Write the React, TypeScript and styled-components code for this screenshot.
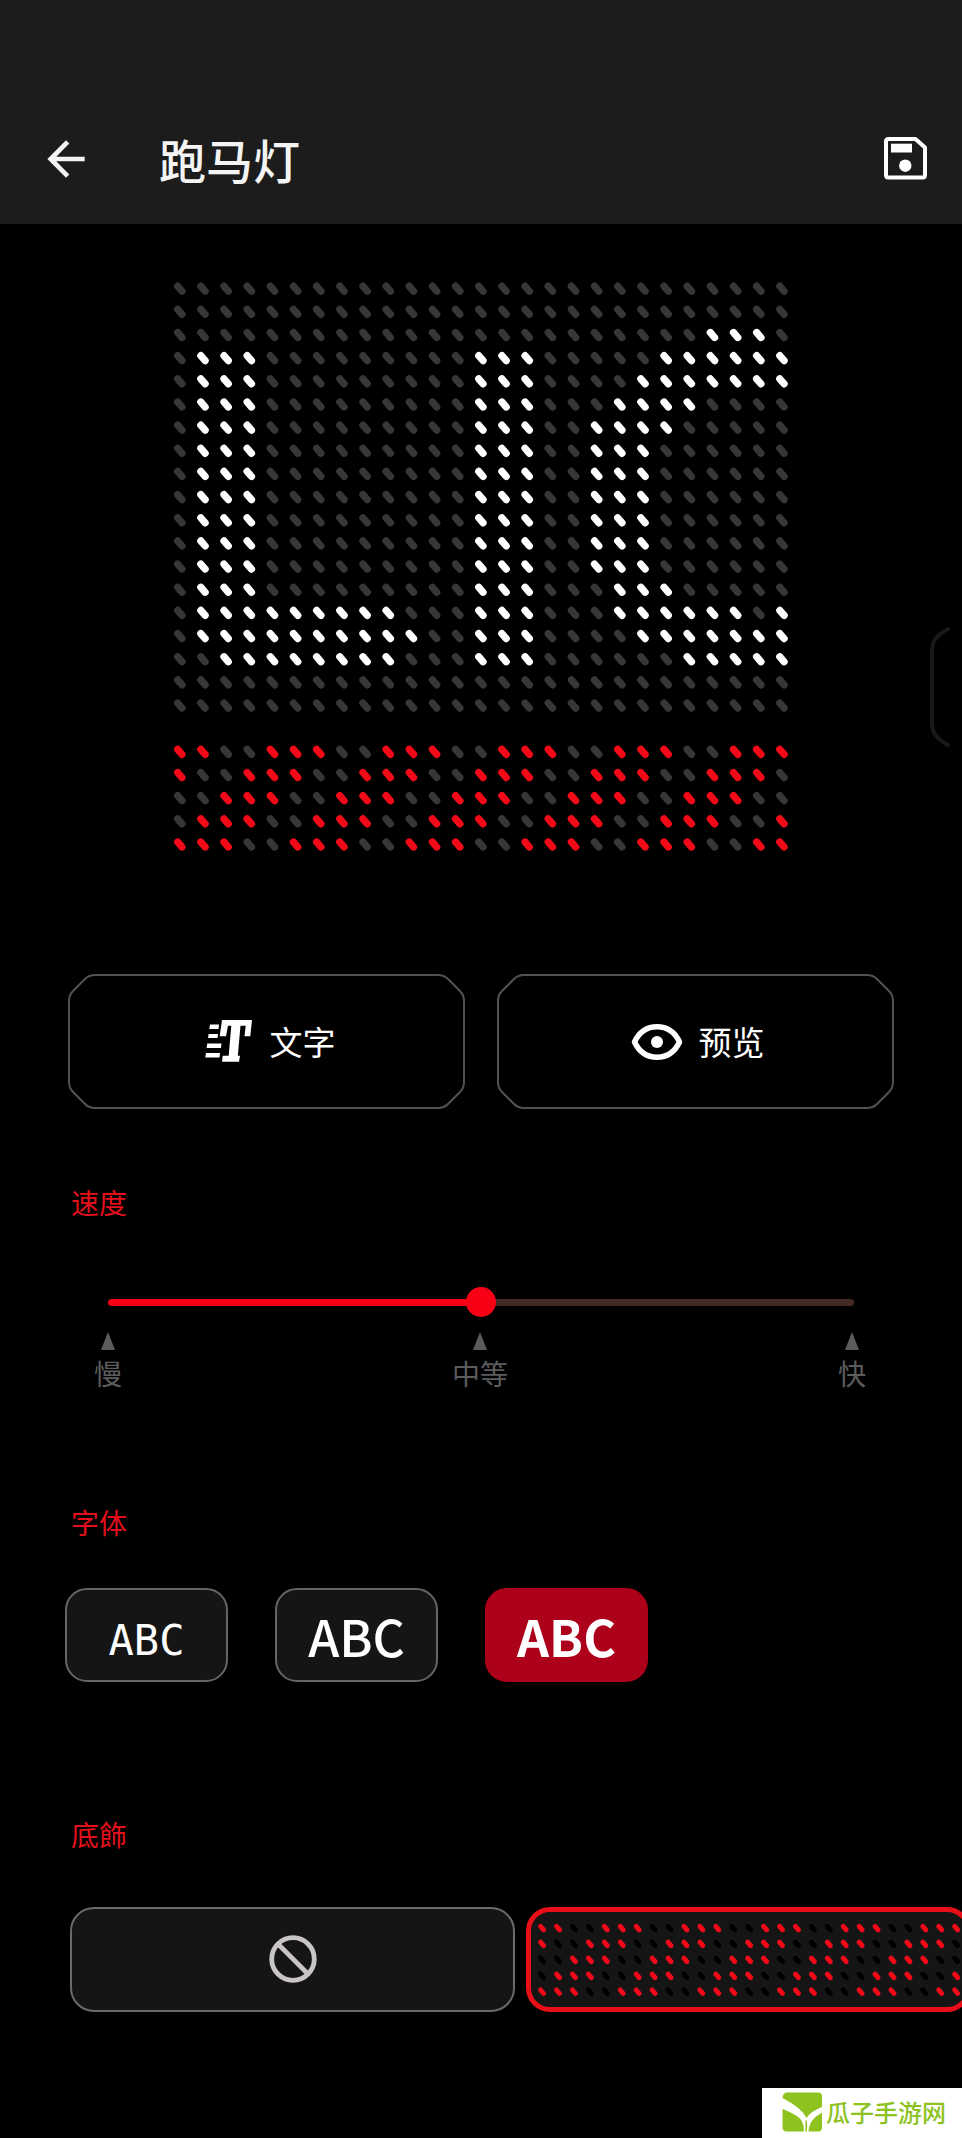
import React, { useState } from 'react';
import styled, { createGlobalStyle } from 'styled-components';

const GlobalStyle = createGlobalStyle`
  *, *::before, *::after { box-sizing: border-box; }
  body { margin: 0; background: #000; }
  button, input { font: inherit; color: inherit; margin: 0; padding: 0; }
`;

const Screen = styled.div`
  position: relative;
  min-height: 100vh;
  overflow: hidden;
  padding-bottom: 126px;
  background: #000;
  color: #fff;
  font-family: "Noto Sans CJK SC", sans-serif;
`;

const TopBar = styled.header`
  display: flex;
  align-items: center;
  height: 224px;
  padding: 94px 28px 0 38px;
  background: #1c1c1c;
`;

const IconButton = styled.button`
  display: flex;
  border: 0;
  background: none;
  cursor: pointer;
`;

const Title = styled.h1`
  flex: 1;
  margin: 0 0 0 65px;
  font-size: 47px;
  font-weight: 500;
  line-height: 64px;
  color: #f4f4f4;
`;

const Preview = styled.section`
  position: relative;
  display: flex;
  justify-content: center;
  padding: 53px 0 118px;
`;

const PreviewMatrix = styled.svg`
  display: block;
  width: 65%;
`;

const DrawerHandle = styled.svg`
  position: absolute;
  top: 402px;
  right: 11px;
`;

const Actions = styled.div`
  display: flex;
  gap: 32px;
  padding: 0 68px;
`;

const frame = encodeURIComponent(
  '<svg xmlns="http://www.w3.org/2000/svg" width="96" height="96"><path d="M1 27Q1 21 5 17L17 5Q21 1 27 1H69Q75 1 79 5L91 17Q95 21 95 27V69Q95 75 91 79L79 91Q75 95 69 95H27Q21 95 17 91L5 79Q1 75 1 69Z" fill="none" stroke="#525252" stroke-width="2"/></svg>'
);

const ActionButton = styled.button`
  flex: 1;
  display: flex;
  align-items: center;
  justify-content: center;
  gap: 16px;
  height: 135px;
  padding-left: 4px;
  border: 28px solid transparent;
  border-image: url("data:image/svg+xml,${frame}") 28 stretch;
  background: none;
  font-size: 33px;
  line-height: 48px;
  cursor: pointer;
`;

const SectionTitle = styled.h2<{ $before: number; $after: number }>`
  margin: ${(p) => p.$before}px 71px ${(p) => p.$after}px;
  font-size: 28px;
  font-weight: 400;
  line-height: 40px;
  color: #e3101c;
`;

const Range = styled.input<{ $percent: number }>`
  appearance: none;
  display: block;
  width: calc(100% - 216px);
  height: 30px;
  margin: 0 108px 14px;
  background: none;
  cursor: pointer;

  &::-webkit-slider-runnable-track {
    height: 7px;
    border-radius: 4px;
    background: linear-gradient(to right, #f50014 ${(p) => p.$percent}%, #432a22 ${(p) => p.$percent}%);
  }
  &::-webkit-slider-thumb {
    appearance: none;
    width: 30px;
    height: 30px;
    margin-top: -12px;
    border-radius: 50%;
    background: #fa0016;
  }
`;

const Ticks = styled.div`
  display: flex;
  justify-content: space-between;
  padding: 0 80px 0 78px;
`;

const Tick = styled.div`
  display: flex;
  flex-direction: column;
  align-items: center;
  gap: 7px;
  width: 60px;
  font-size: 28px;
  line-height: 32px;
  color: #5c5c5c;
`;

const FontRow = styled.div`
  display: flex;
  gap: 47px;
  padding: 0 65px;
`;

type Face = 'pixel' | 'regular' | 'bold';

const FontButton = styled.button<{ $face: Face; $active: boolean }>`
  width: 163px;
  height: 94px;
  padding-top: ${(p) => (p.$face === 'pixel' ? 12 : 0)}px;
  border: 2px solid ${(p) => (p.$active ? '#ad001a' : '#656565')};
  border-radius: 22px;
  background: ${(p) => (p.$active ? '#ad001a' : '#151515')};
  font-family: ${(p) => (p.$face === 'pixel' ? '"DejaVu Sans Mono", monospace' : '"Noto Sans CJK SC", sans-serif')};
  font-size: ${(p) => (p.$face === 'pixel' ? 42 : 50)}px;
  font-weight: ${(p) => (p.$face === 'bold' ? 700 : p.$face === 'regular' ? 500 : 400)};
  line-height: ${(p) => (p.$face === 'pixel' ? 78 : 88)}px;
  cursor: pointer;
`;

const DecorRow = styled.div`
  display: flex;
  gap: 11px;
  padding-left: 70px;
  overflow: hidden;
`;

const DecorTile = styled.button<{ $active: boolean }>`
  flex: 0 0 445px;
  display: flex;
  align-items: center;
  justify-content: center;
  height: 105px;
  border: ${(p) => (p.$active ? '5px solid #e90f19' : '2px solid #6a6a6a')};
  border-radius: 24px;
  background: #151515;
  cursor: pointer;
`;

const TileMatrix = styled.svg`
  flex: none;
  width: 430px;
`;

const Watermark = styled.div`
  position: absolute;
  right: 0;
  bottom: 0;
  display: flex;
  align-items: center;
  gap: 3px;
  width: 200px;
  height: 50px;
  padding: 0 0 2px 20px;
  background: #fff;
  color: #8dc21f;
  font-size: 24px;
  font-weight: 500;
  line-height: 32px;
  white-space: nowrap;
`;

const COLS = 27;
const TEXT_ROWS = [
  '...........................',
  '...........................',
  '.......................###.',
  '.###.........###.....######',
  '.###.........###....#######',
  '.###.........###...####....',
  '.###.........###..####.....',
  '.###.........###..###......',
  '.###.........###..###......',
  '.###.........###..###......',
  '.###.........###..###......',
  '.###.........###..###......',
  '.###.........###..###......',
  '.###.........###...###.....',
  '.#########...###...######.#',
  '.##########..###....#######',
  '..########...###......#####',
  '...........................',
  '...........................',
];

const stripeLit = (row: number, col: number) => [4, 0, 1].includes((row + col) % 5);

type LedProps = { row: number; col: number; color: string };

function Led({ row, col, color }: LedProps) {
  const x = col * 10 + 5;
  const y = row * 10 + 5;
  return (
    <line
      x1={x - 0.85}
      y1={y - 1.05}
      x2={x + 1.05}
      y2={y + 1.15}
      stroke={color}
      strokeWidth={3.1}
      strokeLinecap="round"
    />
  );
}

function Stripes({ offset = 0, off }: { offset?: number; off: string }) {
  return (
    <>
      {Array.from({ length: 5 * COLS }, (_, i) => {
        const row = Math.floor(i / COLS);
        const col = i % COLS;
        return <Led key={i} row={row + offset} col={col} color={stripeLit(row, col) ? '#f30a18' : off} />;
      })}
    </>
  );
}

const BackIcon = () => (
  <svg width="56" height="56" viewBox="0 0 24 24" fill="#f4f4f4" aria-hidden="true">
    <path d="M20 11H7.83l5.59-5.59L12 4l-8 8 8 8 1.41-1.41L7.83 13H20v-2z" />
  </svg>
);

const SaveIcon = () => (
  <svg width="58" height="58" viewBox="0 0 58 58" aria-hidden="true">
    <path
      d="M12.500 9H39.500L49 17.500V45Q49 47.500 46.500 47.500H12.500Q10 47.500 10 45V11.500Q10 9 12.500 9Z"
      fill="none"
      stroke="#fff"
      strokeWidth="4"
      strokeLinejoin="round"
    />
    <rect x="15" y="13.700" width="21" height="8.800" fill="#fff" />
    <circle cx="29.300" cy="35.700" r="6.200" fill="#fff" />
  </svg>
);

const TextIcon = () => (
  <svg width="52" height="44" viewBox="0 0 52 44" fill="#fff" aria-hidden="true">
    <path d="M20 1H50L48.300 17.300H42.500L43.700 6.700H38.500L35.800 36.700H38L37 42.700H20L20.700 36.700H26.700L29.300 6.700H26L24 17.300H17.700Z" />
    <path d="M8 5.500H17L16.500 10H7.300ZM6.600 15H16L15.500 19H6ZM5.300 24.500H19.500L19 29H4.600ZM4 34H18L17.500 38.500H3.300Z" />
  </svg>
);

const EyeIcon = () => (
  <svg width="52" height="44" viewBox="0 0 52 44" aria-hidden="true">
    <path
      d="M3.500 23C8 13.500 16 7.800 26 7.800S44 13.500 48.500 23C44 32.500 36 38.200 26 38.200S8 32.500 3.500 23Z"
      fill="none"
      stroke="#fff"
      strokeWidth="5.500"
      strokeLinejoin="round"
    />
    <circle cx="26" cy="23" r="6" fill="#fff" />
  </svg>
);

const NoneIcon = () => (
  <svg width="48" height="48" viewBox="0 0 48 48" fill="none" stroke="#c9c5c6" aria-hidden="true">
    <circle cx="24" cy="24" r="21.300" strokeWidth="4.800" />
    <path d="M9.500 9.500L38.500 38.500" strokeWidth="4.600" />
  </svg>
);

const TickMark = () => (
  <svg width="14" height="18" viewBox="0 0 14 18" fill="#5c5c5c" aria-hidden="true">
    <path d="M7 0L14 18H0Z" />
  </svg>
);

const LeafLogo = () => (
  <svg width="41" height="40" viewBox="0 0 41 40" fill="#8dc21f" aria-hidden="true">
    <path d="M5 0.500H36Q40 0.500 40 4.500V15Q29 19 24.500 26Q20 16 0.500 6Q1 0.500 5 0.500Z" />
    <path d="M0.500 17C14 23 22 25 22 39.500H5Q0.500 39.500 0.500 35Z" />
    <path d="M40 20.500V35Q40 39.500 36 39.500H26.500Q26.500 28 40 20.500Z" />
    <path d="M23.500 28Q25 28 25 30V39.500H23.500Z" />
  </svg>
);

const faces: Face[] = ['pixel', 'regular', 'bold'];

export default function App() {
  const [speed, setSpeed] = useState(50);
  const [face, setFace] = useState<Face>('bold');
  const [striped, setStriped] = useState(true);

  return (
    <Screen>
      <GlobalStyle />
      <TopBar>
        <IconButton aria-label="返回"><BackIcon /></IconButton>
        <Title>跑马灯</Title>
        <IconButton aria-label="保存"><SaveIcon /></IconButton>
      </TopBar>

      <Preview>
        <PreviewMatrix viewBox="0 0 270 250" aria-hidden="true">
          {TEXT_ROWS.map((line, row) =>
            [...line].map((cell, col) => (
              <Led key={`${row}-${col}`} row={row} col={col} color={cell === '#' ? '#fff' : '#37373a'} />
            ))
          )}
          {striped && <Stripes offset={20} off="#37373a" />}
        </PreviewMatrix>
        <DrawerHandle width="22" height="122" viewBox="0 0 22 122" fill="none" stroke="#191919" strokeWidth="4" strokeLinecap="round" aria-hidden="true">
          <path d="M19 3C10 8 3 13 3 25V97C3 109 10 114 19 119" />
        </DrawerHandle>
      </Preview>

      <Actions>
        <ActionButton><TextIcon />文字</ActionButton>
        <ActionButton><EyeIcon />预览</ActionButton>
      </Actions>

      <SectionTitle $before={73} $after={66}><label htmlFor="speed">速度</label></SectionTitle>
      <Range
        id="speed"
        type="range"
        min={0}
        max={100}
        value={speed}
        $percent={speed}
        onChange={(e) => setSpeed(Number(e.target.value))}
      />
      <Ticks>
        {['慢', '中等', '快'].map((label) => (
          <Tick key={label}><TickMark />{label}</Tick>
        ))}
      </Ticks>

      <SectionTitle $before={113} $after={46}>字体</SectionTitle>
      <FontRow>
        {faces.map((f) => (
          <FontButton key={f} $face={f} $active={face === f} aria-pressed={face === f} onClick={() => setFace(f)}>
            ABC
          </FontButton>
        ))}
      </FontRow>

      <SectionTitle $before={132} $after={53}>底飾</SectionTitle>
      <DecorRow>
        <DecorTile $active={!striped} aria-label="无" aria-pressed={!striped} onClick={() => setStriped(false)}>
          <NoneIcon />
        </DecorTile>
        <DecorTile $active={striped} aria-label="斜纹" aria-pressed={striped} onClick={() => setStriped(true)}>
          <TileMatrix viewBox="0 0 270 50" aria-hidden="true"><Stripes off="#000" /></TileMatrix>
        </DecorTile>
      </DecorRow>

      <Watermark><LeafLogo />瓜子手游网</Watermark>
    </Screen>
  );
}
